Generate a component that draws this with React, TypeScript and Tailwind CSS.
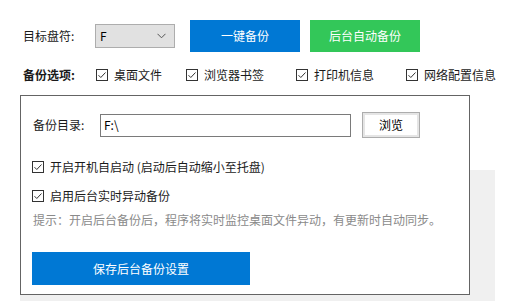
import React from "react";

const font = { fontFamily: '"Noto Sans CJK SC", "Microsoft YaHei", sans-serif' };

function Check({ label }: { label: string }) {
  return (
    <div className="flex items-center">
      <svg width="12" height="12" viewBox="0 0 12 12" className="shrink-0">
        <rect x="0.5" y="0.5" width="11" height="11" fill="#fff" stroke="#333" />
        <path d="M2.5 6.2 L4.8 8.5 L9.5 3.5" fill="none" stroke="#333" strokeWidth="1" />
      </svg>
      <span className="ml-[6px] text-[12px] leading-[16px] text-[#1a1a1a] whitespace-nowrap">{label}</span>
    </div>
  );
}

export default function App() {
  return (
    <div className="relative w-[507px] h-[301px] bg-white overflow-hidden pt-[20px] pl-[20px]" style={font}>
      <div className="absolute left-[20px] top-[170px] w-[475px] h-[140px] bg-[#f0f0f0]" />
      <div className="relative flex items-center h-[32px] pl-[3px]">
        <span className="w-[72px] text-[12px] text-[#1a1a1a]">目标盘符:</span>
        <div className="w-[80px] h-[24px] bg-[#e1e1e1] border border-[#adadad] flex items-center justify-between pl-[4px] pr-[8px]">
          <span className="text-[12px] text-black">F</span>
          <svg width="9" height="6" viewBox="0 0 9 6">
            <path d="M0.5 0.8 L4.5 4.8 L8.5 0.8" fill="none" stroke="#555" strokeWidth="1" />
          </svg>
        </div>
        <div className="ml-[15px] w-[110px] h-[32px] bg-[#0078d4] text-white text-[12px] flex items-center justify-center">一键备份</div>
        <div className="ml-[10px] w-[110px] h-[32px] bg-[#33c759] text-white text-[12px] flex items-center justify-center">后台自动备份</div>
      </div>
      <div className="relative flex items-center h-[16px] mt-[15px] pl-[3px]">
        <span className="w-[73px] text-[12px] font-bold text-[#1a1a1a]">备份选项:</span>
        <div className="w-[90px]"><Check label="桌面文件" /></div>
        <div className="w-[110px]"><Check label="浏览器书签" /></div>
        <div className="w-[110px]"><Check label="打印机信息" /></div>
        <Check label="网络配置信息" />
      </div>
      <div className="relative mt-[12px] w-[450px] h-[200px] bg-white border border-[#646464] pt-[16px] pl-[11px]">
        <div className="flex items-center h-[26px]">
          <span className="w-[68px] pl-[1px] text-[12px] text-[#1a1a1a]">备份目录:</span>
          <div className="w-[251px] h-[23px] border border-[#7a7a7a] flex items-center pl-[3px] text-[12px] text-black">F:\</div>
          <div className="ml-[11px] w-[58px] h-[26px] border border-[#adadad] p-[2px] bg-[#e5e5e5]">
            <div className="w-full h-full bg-white flex items-center justify-center text-[12px] text-black">浏览</div>
          </div>
        </div>
        <div className="mt-[21px]"><Check label="开启开机自启动 (启动后自动缩小至托盘)" /></div>
        <div className="mt-[13px]"><Check label="启用后台实时异动备份" /></div>
        <div className="mt-[8px] pl-[1px] text-[12px] leading-[16px] text-[#8a8a8a] whitespace-nowrap">提示：开启后台备份后，程序将实时监控桌面文件异动，有更新时自动同步。</div>
        <div className="mt-[24px] w-[218px] h-[33px] bg-[#0078d4] text-white text-[12px] flex items-center justify-center">保存后台备份设置</div>
      </div>
    </div>
  );
}
